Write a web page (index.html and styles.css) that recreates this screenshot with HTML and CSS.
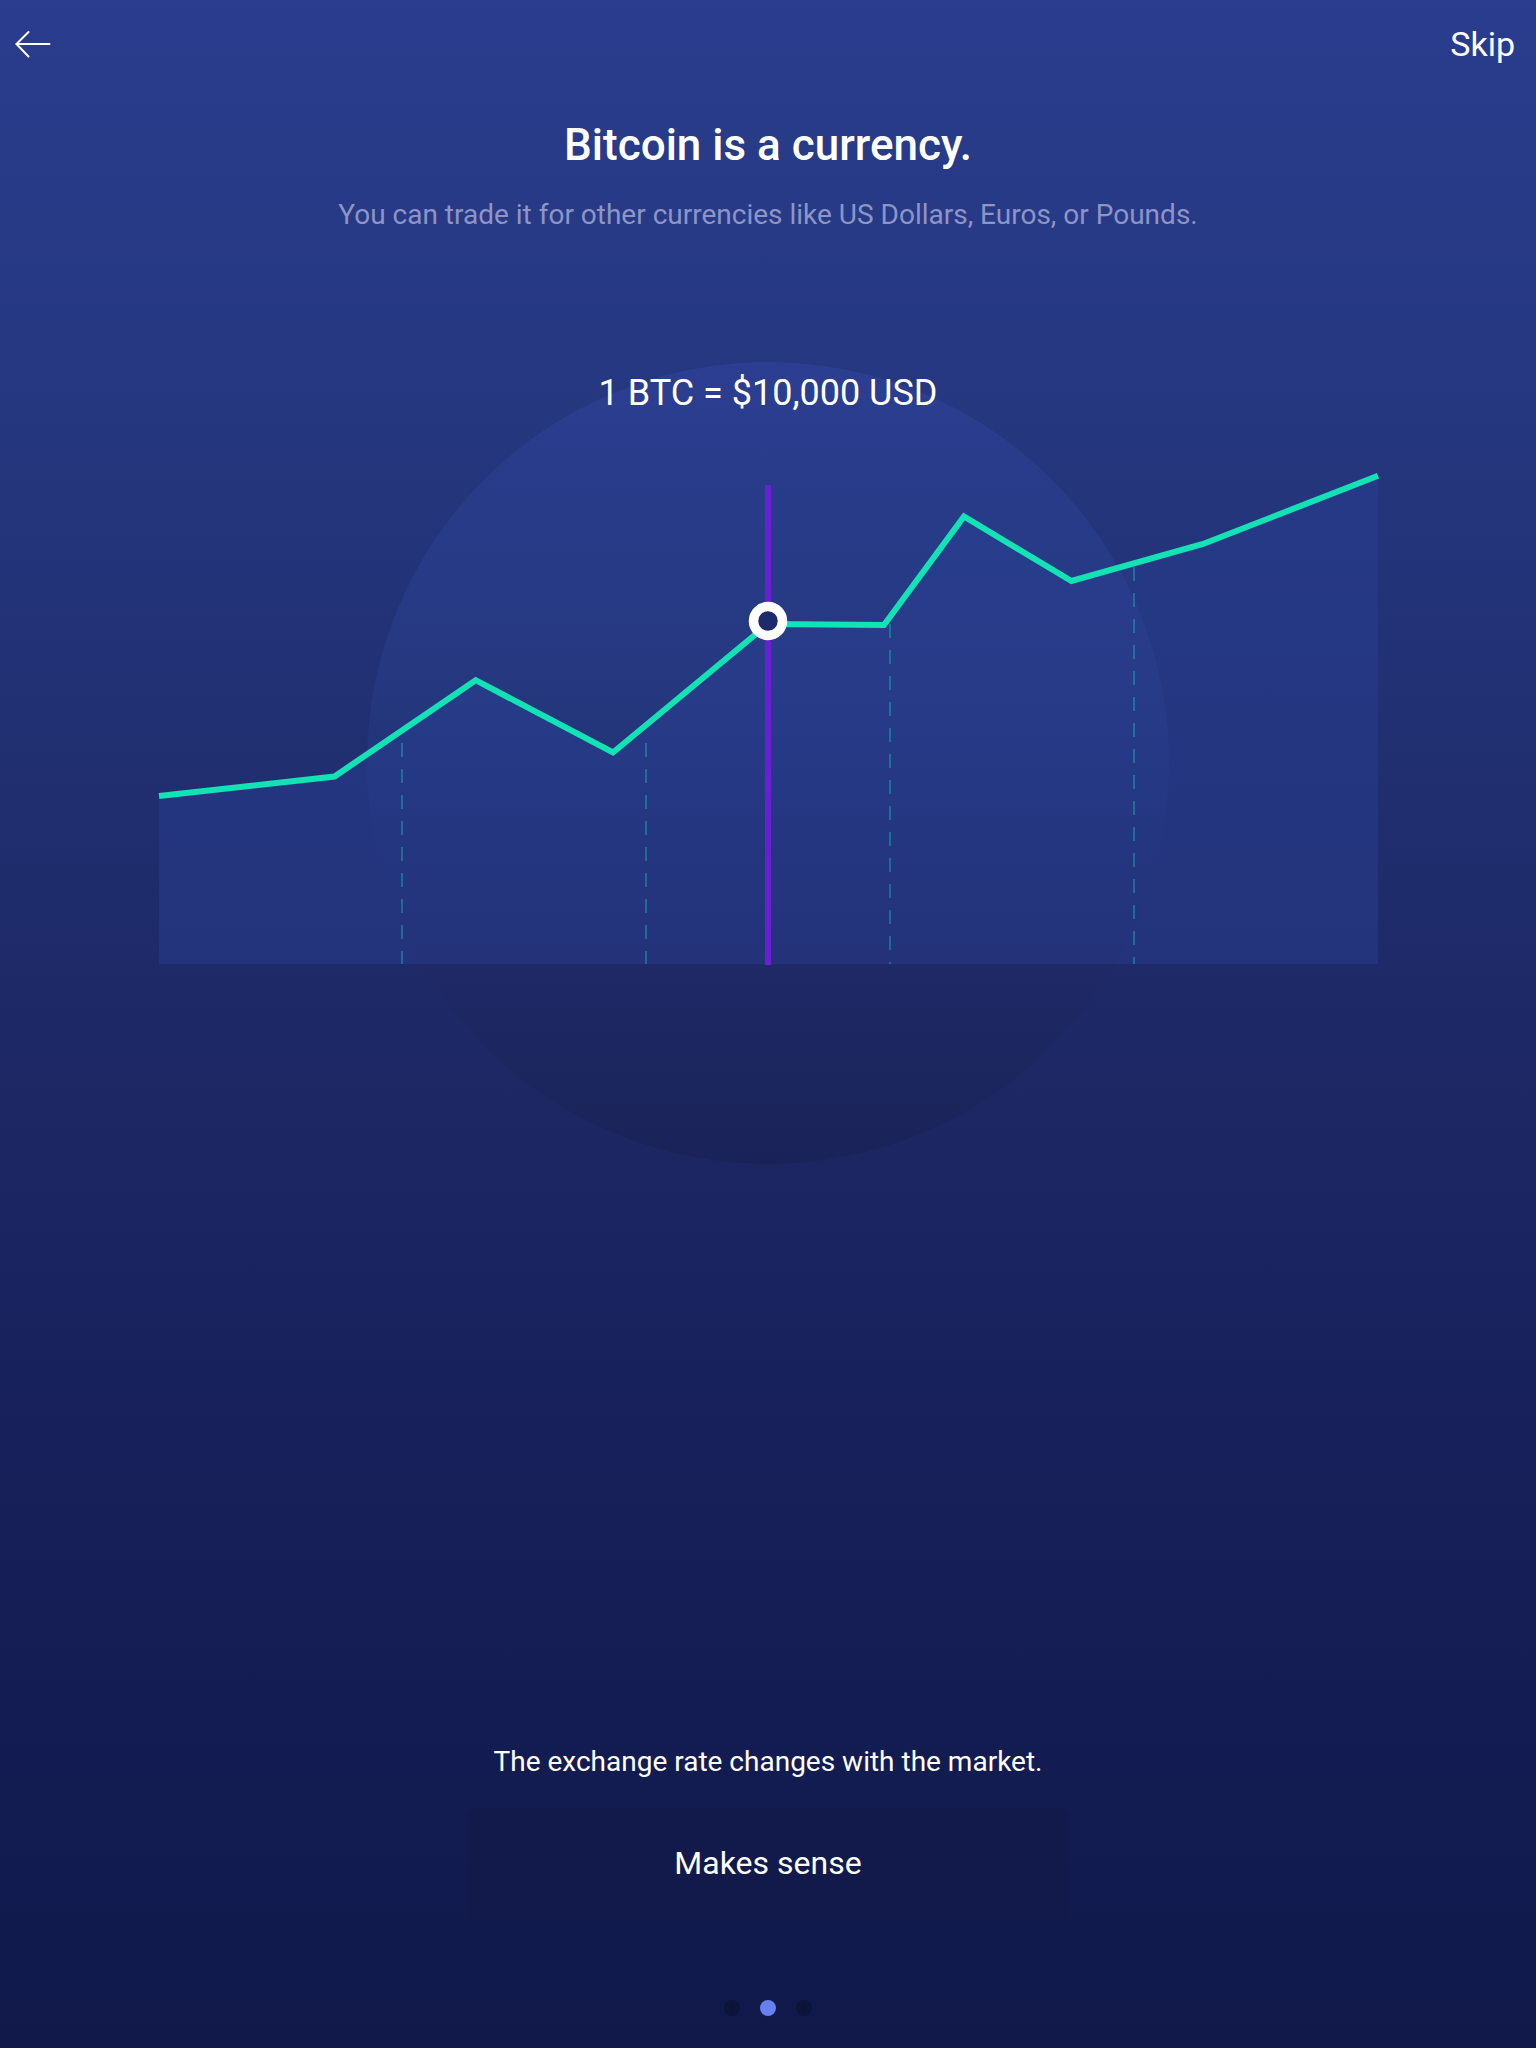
FILE: index.html
```html
<!DOCTYPE html>
<html lang="en">
<head>
<meta charset="utf-8">
<title>Bitcoin is a currency</title>
<link rel="stylesheet" href="styles.css">
</head>
<body>
<div class="page">
  <header class="topbar">
    <button class="back" aria-label="Back">
      <svg width="36" height="40" viewBox="0 0 36 40" fill="none" stroke="#fff" stroke-width="2" stroke-linecap="round" stroke-linejoin="round">
        <path d="M1.5 20H34.5"/>
        <path d="M13.5 8L1.5 20L13.5 32.5"/>
      </svg>
    </button>
    <span class="skip">Skip</span>
  </header>

  <h1 class="title">Bitcoin is a currency.</h1>
  <p class="subtitle">You can trade it for other currencies like US Dollars, Euros, or Pounds.</p>

  <section class="hero">
    <div class="orb"></div>
    <div class="rate">1 BTC = $10,000 USD</div>
    <svg class="chart" width="1220" height="496" viewBox="0 0 1220 496">
      <polygon class="area" points="0,326 175.5,306.5 316.7,210.2 454,282.5 609,154 725,155 805,46.5 912.5,111 1044,74 1219,5.8 1219,494 0,494"/>
      <g class="grid">
        <line x1="243" y1="273" x2="243" y2="494"/>
        <line x1="487" y1="273" x2="487" y2="494"/>
        <line x1="731" y1="154" x2="731" y2="494"/>
        <line x1="975" y1="97" x2="975" y2="494"/>
      </g>
      <line class="cursor" x1="609" y1="15" x2="609" y2="495"/>
      <polyline class="line" points="0,326 175.5,306.5 316.7,210.2 454,282.5 609,154 725,155 805,46.5 912.5,111 1044,74 1219,5.8"/>
      <circle class="marker" cx="609" cy="151" r="14.5"/>
    </svg>
  </section>

  <footer class="bottom">
    <p class="note">The exchange rate changes with the market.</p>
    <button class="cta">Makes sense</button>
    <div class="dots">
      <span class="dot"></span>
      <span class="dot active"></span>
      <span class="dot"></span>
    </div>
  </footer>
</div>
</body>
</html>
```

FILE: styles.css
```css
* { box-sizing: border-box; }

html, body {
  margin: 0;
  padding: 0;
}

body {
  font-family: Roboto, "Liberation Sans", Arial, sans-serif;
  color: #fff;
  background: #0f1747;
}

.page {
  min-height: 2048px;
  display: flex;
  flex-direction: column;
  align-items: center;
  background: linear-gradient(180deg, #2a3d8e 0%, #25377f 20%, #1e2a68 48%, #17205a 70%, #10194a 100%);
  overflow: hidden;
}

.topbar {
  width: 100%;
  display: flex;
  justify-content: space-between;
  align-items: center;
  padding: 24px 21px 0 15px;
  height: 64px;
}

.back {
  background: none;
  border: 0;
  padding: 0;
  margin: 0;
  width: 36px;
  height: 40px;
  display: block;
}

.back svg { display: block; }

.skip {
  font-size: 34px;
  line-height: 40px;
  font-weight: 400;
  color: #fff;
}

.title {
  margin: 56px 0 0;
  font-size: 44px;
  line-height: 50px;
  font-weight: 500;
  text-align: center;
}

.subtitle {
  margin: 28px 0 0;
  font-size: 28px;
  line-height: 34px;
  font-weight: 400;
  color: #8c95c6;
  text-align: center;
}

.hero {
  position: relative;
  width: 100%;
  margin-top: 130px;
  padding-top: 9px;
  display: flex;
  flex-direction: column;
  align-items: center;
}

.orb {
  position: absolute;
  top: 0;
  left: 50%;
  width: 802px;
  height: 802px;
  margin-left: -401px;
  border-radius: 50%;
  background: linear-gradient(180deg, #2b3e91 0%, #25387f 40%, #1f2b69 70%, #1a2358 100%);
}

.rate {
  position: relative;
  font-size: 36px;
  line-height: 44px;
  font-weight: 400;
  color: #fff;
}

.chart {
  position: relative;
  display: block;
  margin-top: 55px;
  margin-left: 1px;
  overflow: visible;
}

.area {
  fill: rgba(42, 64, 150, 0.42);
}

.grid line {
  stroke: rgba(20, 200, 190, 0.38);
  stroke-width: 2;
  stroke-dasharray: 14 12;
}

.cursor {
  stroke: #6a1fd2;
  stroke-width: 6;
}

.line {
  fill: none;
  stroke: #13e2b5;
  stroke-width: 6;
  stroke-linejoin: miter;
}

.marker {
  fill: #1d2a6c;
  stroke: #fff;
  stroke-width: 9.5;
}

.bottom {
  margin-top: auto;
  display: flex;
  flex-direction: column;
  align-items: center;
  padding-bottom: 32px;
}

.note {
  margin: 0;
  font-size: 28px;
  line-height: 34px;
  font-weight: 400;
  color: #fff;
}

.cta {
  margin-top: 29px;
  width: 600px;
  height: 114px;
  padding: 0 0 4px;
  border: 0;
  border-radius: 8px;
  background: #111a4a;
  color: #fff;
  font-family: Roboto, "Liberation Sans", Arial, sans-serif;
  font-size: 32px;
  font-weight: 400;
}

.dots {
  margin-top: 78px;
  display: flex;
  gap: 20px;
}

.dot {
  width: 16px;
  height: 16px;
  border-radius: 50%;
  background: #0c1439;
}

.dot.active {
  background: #6680ee;
}
```
